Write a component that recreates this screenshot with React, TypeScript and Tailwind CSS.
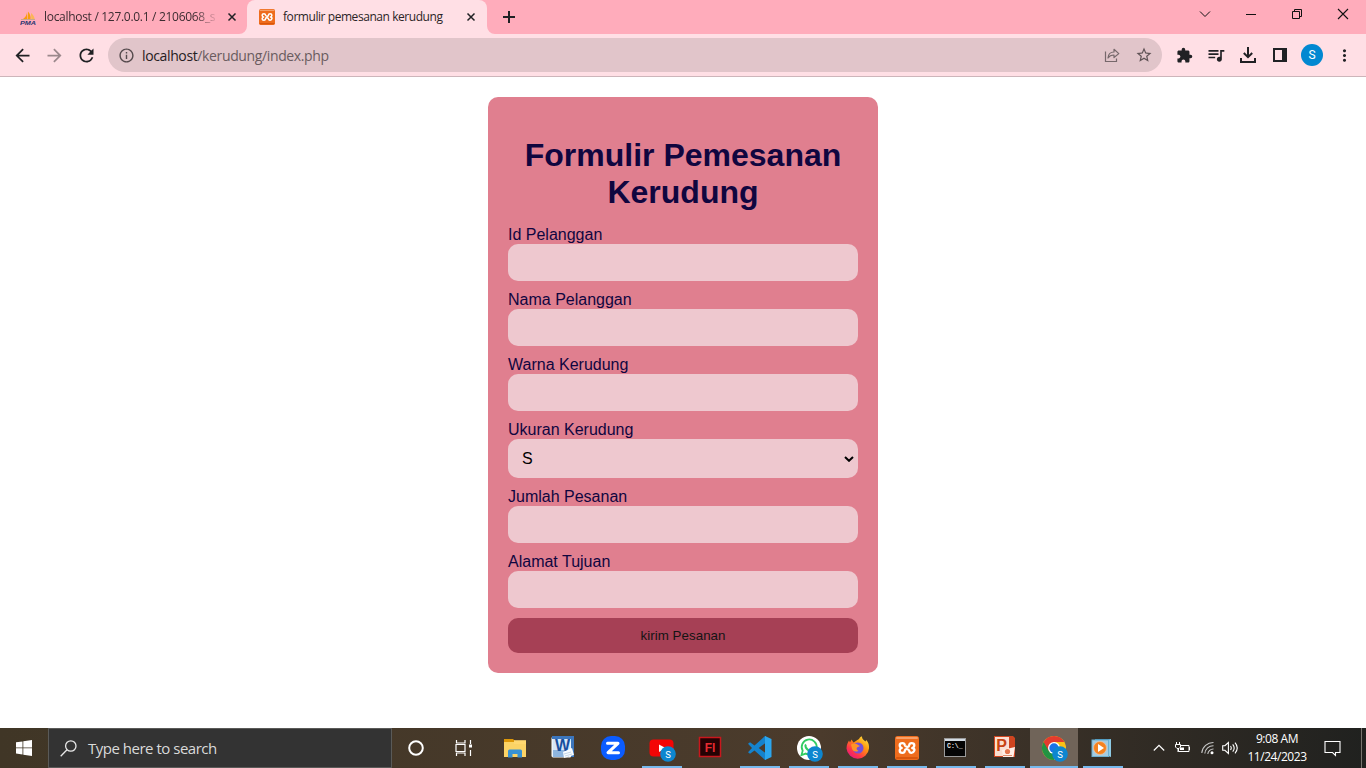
import type { ReactNode } from 'react';
import {
  MdArrowBack,
  MdArrowForward,
  MdExtension,
  MdInfoOutline,
  MdMoreVert,
  MdQueueMusic,
  MdRefresh,
  MdStarBorder,
} from 'react-icons/md';

const UI = "font-['Open_Sans','Noto_Sans',sans-serif]";

function XamppLogo({ size }: { size: number }) {
  return (
    <svg width={size} height={size} viewBox="0 0 24 24" className="shrink-0">
      <rect width="24" height="24" rx="2.5" fill="#ee6c1d" />
      <rect x="1" y="1" width="22" height="2" rx="1" fill="#f6a06a" />
      <rect x="1" y="21" width="22" height="2" rx="1" fill="#d9560c" />
      <path
        d="M7.500 7.200Q4.700 7.200 4.700 9.300T6.800 12Q4.700 12.600 4.700 14.700T7.500 16.800Q9.500 16.800 9.800 14.800T12 13.200t2.200 1.600Q14.500 16.800 16.500 16.800T19.300 14.700 17.200 12Q19.300 11.400 19.300 9.300T16.500 7.200Q14.500 7.200 14.200 9.200T12 10.800 9.800 9.200Q9.500 7.200 7.500 7.200z"
        fill="none"
        stroke="#fff"
        strokeWidth="2.300"
        strokeLinejoin="round"
      />
    </svg>
  );
}

function PmaLogo() {
  return (
    <svg width="16" height="16" viewBox="0 0 16 16" className="shrink-0">
      <path d="M7 1.500C7.300 5 6 8.500 2 10.500h5zM8 2.500c2 2 3 5 2.500 8H7.500z" fill="#f89c0e" />
      <path d="M11 4c2 1.500 3.500 4 3.800 6.500H11.300z" fill="#fbb654" />
      <path d="M1 10.500h14" stroke="#c9a58f" />
      <text x="0" y="15.800" fontSize="6" fontWeight="bold" fontStyle="italic" fontFamily="Liberation Sans, sans-serif" fill="#2b3470" textLength="16" lengthAdjust="spacingAndGlyphs">PMA</text>
    </svg>
  );
}

function CloseMark() {
  return (
    <svg width="10" height="10" viewBox="0 0 10 10" className="shrink-0">
      <path d="M1.500 1.500l7 7M8.500 1.500l-7 7" stroke="#202124" strokeWidth="1.500" />
    </svg>
  );
}

function WindowButton({ children }: { children: ReactNode }) {
  return (
    <div className="flex h-7 w-[46px] items-center justify-center">
      <svg width="12" height="12" viewBox="0 0 12 12" fill="none" stroke="#111" strokeWidth="1">
        {children}
      </svg>
    </div>
  );
}

function TabStrip() {
  return (
    <div className="flex h-[34px] shrink-0 bg-[#ffacbb]">
      <div className="flex w-[247px] items-center pl-5">
        <PmaLogo />
        <div className="ml-2 w-[175px] whitespace-nowrap text-[12px] tracking-[-0.3px] text-[#3c2c31] [mask-image:linear-gradient(to_right,black_150px,transparent_175px)]">
          localhost / 127.0.0.1 / 2106068_s
        </div>
        <div className="ml-2">
          <CloseMark />
        </div>
      </div>
      <div className="relative flex w-60 items-center rounded-t-lg bg-[#ffdfe5] pl-3">
        <svg className="absolute bottom-0 -left-2" width="8" height="8">
          <path d="M8 0v8H0a8 8 0 0 0 8-8z" fill="#ffdfe5" />
        </svg>
        <svg className="absolute -right-2 bottom-0" width="8" height="8">
          <path d="M0 0v8h8a8 8 0 0 1-8-8z" fill="#ffdfe5" />
        </svg>
        <XamppLogo size={16} />
        <div className="ml-2 w-[175px] whitespace-nowrap text-[12px] tracking-[-0.44px] text-[#2b2426]">
          formulir pemesanan kerudung
        </div>
        <div className="ml-2">
          <CloseMark />
        </div>
      </div>
      <div className="flex w-11 items-center justify-center">
        <svg width="12" height="12" viewBox="0 0 12 12">
          <path d="M6 0v12M0 6h12" stroke="#202124" strokeWidth="2" />
        </svg>
      </div>
      <div className="ml-auto flex">
        <WindowButton>
          <path d="M1 3.500l5 5 5-5" />
        </WindowButton>
        <WindowButton>
          <path d="M1 6.500h10" />
        </WindowButton>
        <WindowButton>
          <path d="M1.500 3.500h7v7h-7zM3.500 3.500v-2h7v7h-2" />
        </WindowButton>
        <WindowButton>
          <path d="M1 1l10 10M11 1L1 11" strokeWidth="1.100" />
        </WindowButton>
      </div>
    </div>
  );
}

function Tool({ children }: { children: ReactNode }) {
  return <div className="flex w-8 shrink-0 items-center justify-center text-[#202124]">{children}</div>;
}

function Toolbar() {
  return (
    <div className="flex h-[43px] shrink-0 items-center border-b border-[#cdb5ba] bg-[#ffdfe5] px-1.5">
      <Tool>
        <MdArrowBack size={21} />
      </Tool>
      <Tool>
        <MdArrowForward size={21} color="#9b888c" />
      </Tool>
      <Tool>
        <MdRefresh size={21} />
      </Tool>
      <div className="ml-1.5 flex h-[34px] flex-1 items-center rounded-full bg-[#e1c5ca] pl-[10px]">
        <MdInfoOutline size={17} color="#54494c" />
        <div className="ml-[7px] text-[14px] tracking-[-0.37px] text-[#6a5c5f]">
          <span className="text-[#262022]">localhost</span>/kerudung/index.php
        </div>
        <div className="ml-auto flex">
          <Tool>
            <svg width="16" height="16" viewBox="0 0 16 16" fill="none" stroke="#76686b" strokeWidth="1.200">
              <path d="M1.500 4.500v10h11v-3" />
              <path d="M4 11c.3-4 2.500-6 6-6V2.300L14.800 6.600 10 10.500V8C7.500 8 5.500 8.700 4 11z" strokeLinejoin="round" />
            </svg>
          </Tool>
          <Tool>
            <MdStarBorder size={18} color="#5f5356" />
          </Tool>
        </div>
        <div className="w-0.5" />
      </div>
      <div className="-mr-1.5 ml-1.5 flex pr-1.5">
        <Tool>
          <MdExtension size={17} />
        </Tool>
        <Tool>
          <MdQueueMusic size={20} />
        </Tool>
        <Tool>
          <svg width="18" height="18" viewBox="0 0 18 18" fill="none" stroke="#202124" strokeWidth="2">
            <path d="M9 1v9.500M4.800 7L9 11.200 13.200 7M2 12v4h14v-4" />
          </svg>
        </Tool>
        <Tool>
          <svg width="14" height="14" viewBox="0 0 14 14">
            <path d="M1 1h12v12H1z" fill="none" stroke="#202124" strokeWidth="2" />
            <path d="M9 0h5v14H9z" fill="#202124" />
          </svg>
        </Tool>
        <Tool>
          <div className="flex size-[22px] items-center justify-center rounded-full bg-[#0288d1] font-['Roboto',sans-serif] text-[12px] text-white">
            S
          </div>
        </Tool>
        <Tool>
          <MdMoreVert size={19} />
        </Tool>
      </div>
    </div>
  );
}

const labelClass = 'block text-[16px] leading-[18px]';

function TextField({ label, name }: { label: string; name: string }) {
  return (
    <div className="mb-[10px]">
      <label htmlFor={name} className={labelClass}>
        {label}
      </label>
      <input id={name} name={name} className="block h-[37px] w-full rounded-[10px] bg-[#eec8cf] px-[10px] outline-none" />
    </div>
  );
}

function OrderForm() {
  return (
    <form
      onSubmit={(e) => e.preventDefault()}
      className="mt-5 h-[576px] w-[390px] rounded-[10px] bg-[#e07f8f] px-5 pt-10 font-['Liberation_Sans',Arial,sans-serif] text-[#10063f]"
    >
      <h1 className="mb-[15px] text-center text-[32px] leading-[37px] font-bold">
        Formulir Pemesanan Kerudung
      </h1>
      <TextField label="Id Pelanggan" name="id" />
      <TextField label="Nama Pelanggan" name="nama" />
      <TextField label="Warna Kerudung" name="warna" />
      <div className="mb-[10px]">
        <span className={labelClass}>Ukuran Kerudung</span>
        <div className="flex h-[39px] items-center justify-between rounded-[10px] bg-[#eec8cf] pr-1 pl-[14px] text-[16px] text-black">
          <span>S</span>
          <svg width="10" height="6" viewBox="0 0 10 6">
            <path d="M1 1l4 3.800L9 1" fill="none" stroke="#000" strokeWidth="2" />
          </svg>
        </div>
      </div>
      <TextField label="Jumlah Pesanan" name="jumlah" />
      <TextField label="Alamat Tujuan" name="alamat" />
      <button className="block h-[35px] w-full rounded-[10px] bg-[#a64055] text-[13.333px] tracking-[0.05px] text-[#141414]">
        kirim Pesanan
      </button>
    </form>
  );
}

function Badge() {
  return (
    <>
      <circle cx="22" cy="22" r="7.800" fill="#0d86cf" />
      <text x="22" y="25.500" fontSize="9.500" textAnchor="middle" fill="#fff" fontFamily="Roboto, sans-serif">S</text>
    </>
  );
}

type SlotProps = { children: ReactNode; running?: boolean; active?: boolean };

function Slot({ children, running, active }: SlotProps) {
  return (
    <div className={`mr-px flex h-10 w-12 shrink-0 flex-col items-center ${active ? 'bg-[#706459]' : ''}`}>
      <div className="flex h-[38px] items-center pt-0.5">
        <svg width="32" height="32" viewBox="0 0 32 32">
          {children}
        </svg>
      </div>
      <div className={`h-0.5 ${active ? 'w-12 bg-[#76b9ed]' : running ? 'w-10 bg-[#76b9ed]' : 'w-10'}`} />
    </div>
  );
}

function Taskbar() {
  return (
    <div className="flex h-10 shrink-0 bg-linear-to-r from-[#403626] via-[#4b3b2c] via-60% to-[#20211f]">
      <div className="flex w-12 items-center justify-center">
        <svg width="16" height="16" viewBox="0 0 16 16" fill="#fff">
          <path d="M0 2.300L6.500 1.400v6.100H0zM7.300 1.300L16 0v7.500H7.300zM0 8.300h6.500v6.200L0 13.600zM7.300 8.300H16V16l-8.700-1.300z" />
        </svg>
      </div>
      <div className="flex w-[344px] items-center border border-[#5a5a58] bg-[#333333] pl-[11px]">
        <svg width="17" height="17" viewBox="0 0 17 17" fill="none" stroke="#e8e8e8" strokeWidth="1.300">
          <circle cx="10.800" cy="6" r="5.200" />
          <path d="M7 9.800L.7 16.200" />
        </svg>
        <span className="ml-[11px] text-[15px] tracking-[-0.49px] text-[#dadada]">Type here to search</span>
      </div>
      <div className="flex">
        <div className="flex w-[98px]">
          <Slot>
            <circle cx="16" cy="16" r="6.800" fill="none" stroke="#fff" strokeWidth="2" />
          </Slot>
          <Slot>
            <path d="M7.500 8v3h8.500V8M7.500 24v-3h8.500v3M7 12.500h9v7H7zM21.500 8v4M21.500 18v6" fill="none" stroke="#fff" strokeWidth="1.200" />
            <path d="M20 12.500h3v3h-3z" fill="#fff" />
          </Slot>
        </div>
        <Slot>
          <g transform="translate(1 0)">
            <path d="M5 7h9l1.500 1.500V12H5z" fill="#de9809" />
            <path d="M5 10h22v15H5z" fill="#fbd366" />
            <path d="M15 8.200h12V12H15z" fill="#ffd870" />
            <path d="M9 25.500v-6.500q0-1.500 1.500-1.500h11q1.500 0 1.500 1.500v6.500h-4.500v-3.500h-5v3.500z" fill="#3792d4" />
          </g>
        </Slot>
        <Slot>
          <rect x="5" y="5" width="19" height="20" rx="1" fill="#d7e7f7" stroke="#fff" />
          <path d="M5 4h22v21h-3V7H5z" fill="#3c76bd" />
          <path d="M6 18h16v7H6z" fill="#8eb5df" />
          <text x="15.500" y="19" textAnchor="middle" fontSize="16" fontWeight="bold" fill="#174f9e" fontFamily="Liberation Sans, sans-serif">W</text>
          <path d="M16 20l9-4 2 7-10 3z" fill="#f7fbff" />
          <path d="M17 22l7-2M18 24l7-2" stroke="#b6cbe1" strokeWidth=".8" />
        </Slot>
        <Slot>
          <rect x="5" y="4" width="24" height="24" rx="10" fill="#0b5cff" />
          <path d="M11.500 11.300h10.500L12 20.700h10.500" fill="none" stroke="#fff" strokeWidth="3" strokeLinejoin="round" strokeLinecap="round" />
        </Slot>
        <div className="w-px shrink-0" />
        <Slot running>
          <rect x="3.500" y="7.500" width="24" height="17" rx="4" fill="#f40505" />
          <path d="M13 12.500l7 3.800-7 3.800z" fill="#fff" />
          <Badge />
        </Slot>
        <Slot>
          <rect x="4.500" y="5.500" width="21" height="19" fill="#250204" stroke="#c9171c" strokeWidth="1.500" />
          <text x="15" y="19.500" textAnchor="middle" fontSize="12" fontWeight="bold" fill="#e72b31" fontFamily="Liberation Sans, sans-serif">Fl</text>
        </Slot>
        <Slot running>
          <path d="M21 4l-10.500 9.600L6 10.200l-2 1.600 4 4.200-4 4.200 2 1.600 4.500-3.400L21 28l1-.5v-23zM21.500 11v10l-6.800-5z" fill="#1583cd" fillRule="evenodd" />
          <path d="M21 4l6.500 3v18L21 28z" fill="#2ba6ee" />
        </Slot>
        <Slot running>
          <circle cx="16" cy="16" r="12" fill="#fff" />
          <path d="M8.500 23l1.200-4.300a7.500 7.500 0 1 1 3 2.900z" fill="none" stroke="#31cc62" strokeWidth="1.800" />
          <path d="M13 12.500c-1 1-.5 3 1.500 5s4 2.500 5 1.500" fill="none" stroke="#31cc62" strokeWidth="2.200" />
          <Badge />
        </Slot>
        <Slot running>
          <defs>
            <linearGradient id="flame" x1="1" y1="0" x2="0.200" y2="1">
              <stop offset="0" stopColor="#fff44f" />
              <stop offset=".4" stopColor="#ff980e" />
              <stop offset=".75" stopColor="#ff3647" />
              <stop offset="1" stopColor="#e31587" />
            </linearGradient>
          </defs>
          <path d="M17 7c1-2 2-2.500 3-2.500 0 3 2 3.500 3.500 5l.8-1.500c2.300 2.500 3 5.500 2.700 8.500a11.300 11.300 0 0 1-22.500 0c0-4 1.500-6 2.500-8l1 2 1.500-3 2 3z" fill="url(#flame)" />
          <circle cx="16" cy="16" r="5.500" fill="#7550d8" />
          <path d="M9 12.500c3-1.500 5-1 7 .5l2 1-3 1.500c-1 1.500 0 3 1.500 3.200-3 2-6 .3-6.500-2.200z" fill="#ff9427" />
        </Slot>
        <Slot running>
          <svg x="4" y="4" width="24" height="24">
            <XamppLogo size={24} />
          </svg>
        </Slot>
        <Slot running>
          <rect x="4.500" y="6.500" width="21" height="18" fill="#050505" stroke="#9b9b9b" />
          <path d="M5 7h20v2H5z" fill="#d4dce4" />
          <text x="7" y="15.500" fontSize="6.500" fontWeight="bold" fill="#e8e8e8" fontFamily="Liberation Mono, monospace">C:\_</text>
        </Slot>
        <Slot running>
          <path d="M5 4h19l2 2v19H5z" fill="#cf4520" />
          <path d="M6 5h14v19H6z" fill="#faded0" />
          <text x="12.500" y="19" textAnchor="middle" fontSize="16" fontWeight="bold" fill="#c84312" fontFamily="Liberation Sans, sans-serif">P</text>
          <path d="M13 18l13-3-1.500 10H14z" fill="#fff0e8" />
          <circle cx="18.500" cy="19.500" r="2.600" fill="#e4754d" />
          <path d="M14 23.500h9" stroke="#dd8d6d" />
        </Slot>
        <Slot running active>
          <circle cx="16" cy="16" r="12" fill="#fbc116" />
          <path d="M5.600 10a12 12 0 0 0 10.400 18l5-9-5-3z" fill="#229342" />
          <path d="M16 10h10.400a12 12 0 0 0-20.800 0l5.200 9z" fill="#e33b2e" />
          <circle cx="16" cy="16" r="6" fill="#fff" />
          <circle cx="16" cy="16" r="4.700" fill="#1a73e8" />
          <Badge />
        </Slot>
        <Slot running>
          <path d="M8 7h16v17H8z" fill="#3c8db5" />
          <path d="M21 8l3-1v18l-3-1z" fill="#8ecbe5" />
          <rect x="5" y="8" width="16.500" height="16.500" fill="#a5cbe0" stroke="#6bb0d2" />
          <circle cx="13" cy="16" r="6.500" fill="#f58220" stroke="#fcc69b" strokeWidth=".6" />
          <path d="M11 12l6 4-6 4z" fill="#fff" />
        </Slot>
      </div>
      <div className="ml-auto flex items-center text-white">
        <svg width="12" height="8" viewBox="0 0 12 8" fill="none" stroke="#fff" strokeWidth="1.200">
          <path d="M.8 6.500L6 1.300l5.200 5.200" />
        </svg>
        <svg className="ml-[9px]" width="17" height="14" viewBox="0 0 17 14" fill="none" stroke="#fff" strokeWidth="1">
          <path d="M6 4.500h9v6H4.500V8M15.500 6v3M2.500 1v2M5.500 1v2M1.500 3.500h5V6L5 7.500H3L1.500 6zM4 7.500V11" />
          <path d="M6 6.500h4v2.500H6z" fill="#fff" stroke="none" />
        </svg>
        <svg className="ml-[10px]" width="13" height="14" viewBox="0 0 13 14" fill="none" stroke="#c8c8c8" strokeWidth="1.100">
          <path d="M.8 12A11.500 11.500 0 0 1 12.500 1.500M3.800 12.500a8.500 8.500 0 0 1 8.700-7.800M6.800 13a5.500 5.500 0 0 1 5.700-5" />
          <circle cx="11" cy="11.800" r="1.500" fill="#fff" stroke="none" />
        </svg>
        <svg className="ml-2" width="17" height="14" viewBox="0 0 17 14" fill="none" stroke="#fff" strokeWidth="1.100">
          <path d="M.7 4.700h2.200L6.400 1.500v11L2.900 9.300H.7zM8.500 5q1.500 2 0 4M10.700 3.300q3 3.700 0 7.400M13 1.700q4.500 5.300 0 10.600" />
        </svg>
        <div className="ml-2 flex w-[60px] flex-col items-center text-[12px] leading-[18px] tracking-[-0.45px] whitespace-nowrap">
          <span>9:08 AM</span>
          <span>11/24/2023</span>
        </div>
        <svg className="ml-[17px]" width="17" height="17" viewBox="0 0 17 17" fill="none" stroke="#fff" strokeWidth="1.100">
          <path d="M1 1.500h15v11h-4.500v3l-3-3H1z" />
        </svg>
        <div className="mr-1 ml-5 h-10 w-px bg-[#77756f]" />
      </div>
    </div>
  );
}

export default function App() {
  return (
    <div className={`flex h-screen w-full flex-col overflow-hidden bg-white ${UI}`}>
      <TabStrip />
      <Toolbar />
      <main className="flex flex-1 items-start justify-center">
        <OrderForm />
      </main>
      <Taskbar />
    </div>
  );
}
